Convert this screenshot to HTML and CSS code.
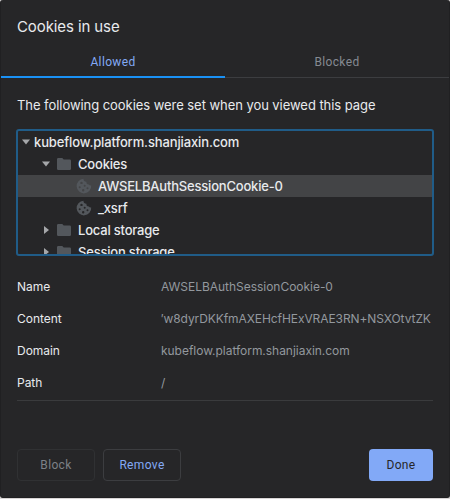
FILE: index.html
```html
<!DOCTYPE html>
<html lang="en">
<head>
<meta charset="utf-8">
<title>Cookies in use</title>
<link rel="stylesheet" href="styles.css">
</head>
<body>
<svg class="defs" width="0" height="0">
  <symbol id="folder" viewBox="0 0 14 12"><path d="M1.3 0h4l1.4 1.4h6A1.3 1.3 0 0 1 14 2.7v8A1.3 1.3 0 0 1 12.7 12H1.3A1.3 1.3 0 0 1 0 10.7V1.3A1.3 1.3 0 0 1 1.3 0z"/></symbol>
  <symbol id="cookie" viewBox="0 0 16 16"><path fill-rule="evenodd" d="M7.500 .8a2.600 2.600 0 0 0 3 3 2.300 2.300 0 0 0 2.300 2.700 2.500 2.500 0 0 0 2.400 1A7.300 7.300 0 1 1 7.500 .8zM5.500 3.700a1.200 1.200 0 1 0 0 2.400 1.200 1.200 0 0 0 0-2.400zM3.700 8.300a1 1 0 1 0 0 2 1 1 0 0 0 0-2zM8.700 6.700a1 1 0 1 0 0 2 1 1 0 0 0 0-2zM7.200 11a1.200 1.200 0 1 0 0 2.400 1.200 1.200 0 0 0 0-2.400zM11.500 9.300a1 1 0 1 0 0 2 1 1 0 0 0 0-2z"/></symbol>
  <symbol id="down" viewBox="0 0 8 6"><path d="M0 .5h8L4 5.500z"/></symbol>
  <symbol id="right" viewBox="0 0 5 8"><path d="M0 0v8l5-4z"/></symbol>
</svg>
<main class="dialog">
  <h1>Cookies in use</h1>
  <nav class="tabs">
    <div class="tab active">Allowed</div>
    <div class="tab">Blocked</div>
  </nav>
  <p class="intro">The following cookies were set when you viewed this page</p>
  <div class="tree">
    <div class="row root"><svg class="down"><use href="#down"/></svg><span class="host">kubeflow.platform.shanjiaxin.com</span></div>
    <div class="row group"><svg class="down"><use href="#down"/></svg><svg class="folder"><use href="#folder"/></svg><span>Cookies</span></div>
    <div class="row leaf selected"><svg class="cookie"><use href="#cookie"/></svg><span>AWSELBAuthSessionCookie-0</span></div>
    <div class="row leaf"><svg class="cookie"><use href="#cookie"/></svg><span>_xsrf</span></div>
    <div class="row group"><svg class="right"><use href="#right"/></svg><svg class="folder"><use href="#folder"/></svg><span>Local storage</span></div>
    <div class="row group"><svg class="right"><use href="#right"/></svg><svg class="folder"><use href="#folder"/></svg><span>Session storage</span></div>
  </div>
  <dl class="details">
    <dt>Name</dt><dd>AWSELBAuthSessionCookie-0</dd>
    <dt>Content</dt><dd class="content"><span class="quote">′</span>w8dyrDKKfmAXEHcfHExVRAE3RN+NSXOtvtZK</dd>
    <dt>Domain</dt><dd>kubeflow.platform.shanjiaxin.com</dd>
    <dt>Path</dt><dd>/</dd>
  </dl>
  <footer>
    <button class="block" disabled>Block</button>
    <button class="remove">Remove</button>
    <button class="done">Done</button>
  </footer>
</main>
</body>
</html>
```

FILE: styles.css
```css
* { box-sizing: border-box; }
body { margin: 0; height: 499px; overflow: hidden; background: #d8d5d5; font-family: Inter, "Liberation Sans", sans-serif; color: #e8eaed; }
.defs { display: block; }
.dialog { height: 498px; border: 1px solid #202022; border-top: 0; border-radius: 3px; background: #262628; overflow: hidden; }
h1 { margin: 0; padding: 17px 16px 0; height: 46px; font-size: 15px; line-height: 20px; font-weight: 400; letter-spacing: -.1px; }
.tabs { display: grid; grid-template-columns: 1fr 1fr; height: 32px; }
.tab { display: flex; justify-content: center; height: 32px; border-bottom: 1px solid #3c3d40; font: 400 12px/32px Roboto, sans-serif; color: #858a92; letter-spacing: .35px; }
.tab.active { border-bottom: 2px solid #1a91f5; color: #83a9f4; }
.intro { margin: 0; padding: 17px 16px 0; height: 51px; font-size: 13px; line-height: 20px; letter-spacing: -.055px; white-space: nowrap; }
.tree { margin: 0 15px; height: 127px; overflow: hidden; border: 2px solid #205c88; border-radius: 3px; }
.row { display: flex; align-items: center; height: 22px; font-size: 13px; font-weight: 500; line-height: 22px; letter-spacing: -.2px; white-space: nowrap; }
.host { letter-spacing: -.13px; }
svg { flex: none; fill: #a5a7aa; }
.root { padding-left: 4px; }
.group { padding-left: 24px; }
.leaf { padding-left: 58px; }
.selected { background: #434446; }
.down { width: 8px; height: 6px; margin-right: 4px; }
.right { width: 5px; height: 8px; margin: 0 5px 0 2px; }
.folder { width: 14px; height: 12px; margin: 0 7px 0 3px; fill: #53575c; }
.cookie { width: 16px; height: 16px; margin-right: 6px; fill: #53575c; }
.details { display: grid; grid-template-columns: 144px 272px; grid-auto-rows: 32px; margin: 15px 16px 0; height: 130px; border-bottom: 1px solid #3a3b3d; font-size: 12px; line-height: 32px; letter-spacing: -.03px; white-space: nowrap; }
dt, dd { margin: 0; }
dd { color: #93989e; }
.content { letter-spacing: -.08px; }
.quote { display: inline-block; width: 2.5px; }
footer { display: flex; gap: 8px; padding: 48px 16px 0; }
button { height: 32px; padding: 0; border: 1px solid #3c3d40; border-radius: 4px; background: transparent; font: 400 12px/30px Roboto, sans-serif; letter-spacing: .35px; }
.block { width: 78px; border-color: #303133; color: #7d8186; }
.remove { width: 78px; color: #83a9f4; }
.done { width: 64px; margin-left: auto; border: 0; background: #82a9f7; color: #262628; }
```
